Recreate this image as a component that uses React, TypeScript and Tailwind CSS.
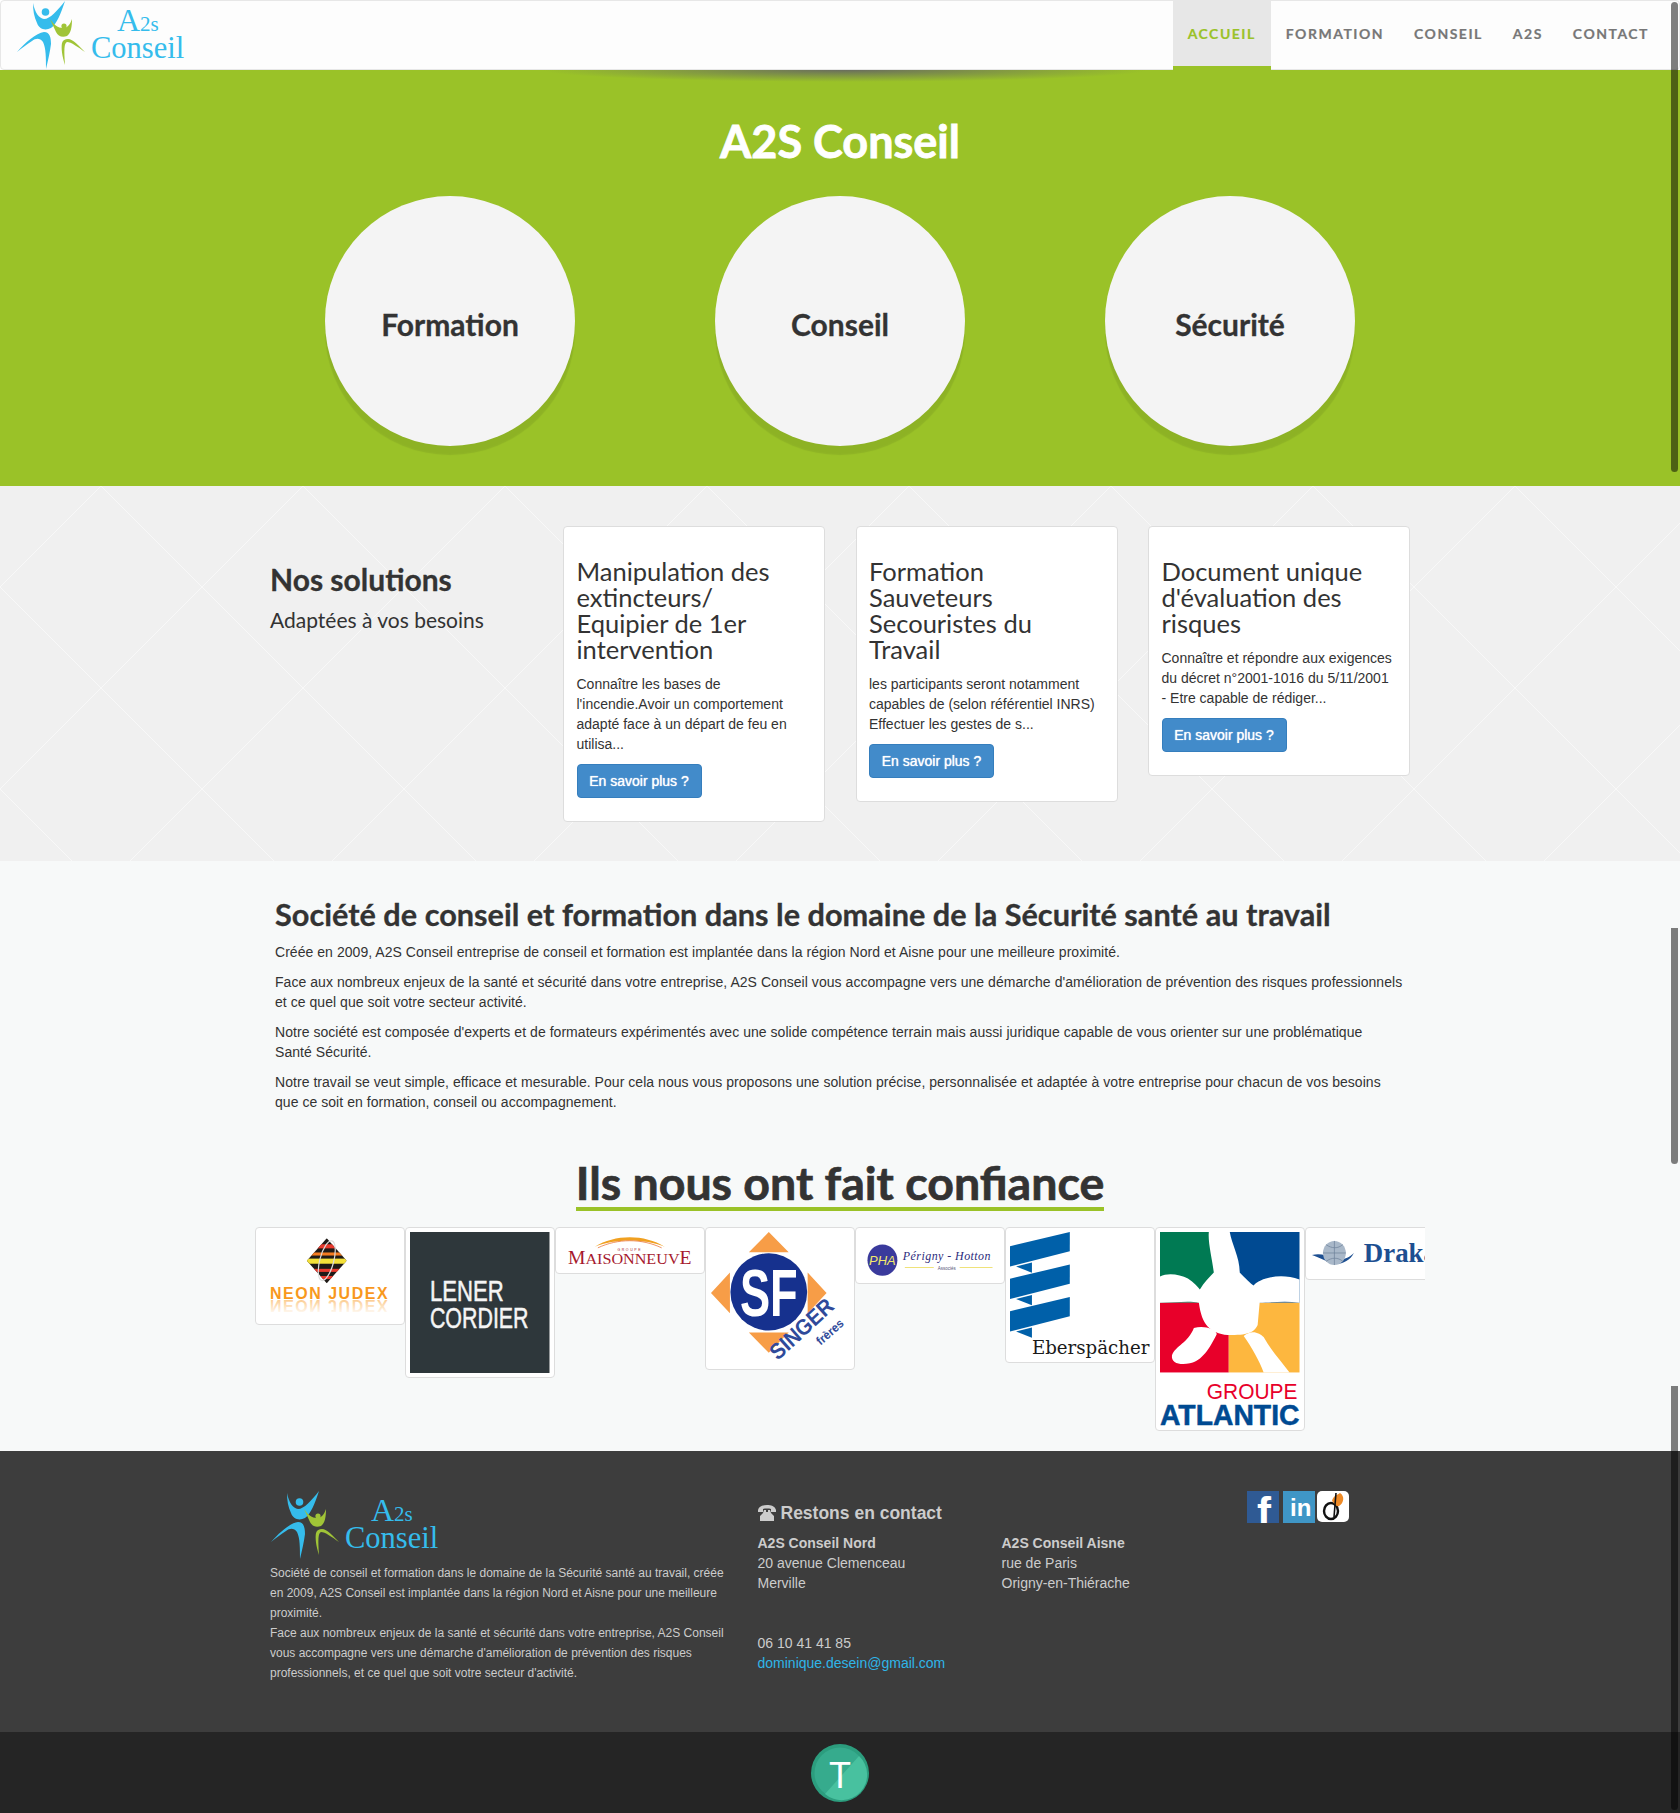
import React from "react";

const raleway = "font-['Lato','Open_Sans',sans-serif]";

function Logo({ className }: { className?: string }) {
  return (
    <svg viewBox="16 0 170 70" className={className}>
      <path fill="#35bcec" d="M33 3C35 13 39 18 44 19C50 19 57 11 65 1C61 13 57 24 51 28C45 31 39 29 37 23C34 17 33 10 33 3Z" />
      <circle cx="45.5" cy="12" r="3.8" fill="#35bcec" />
      <path fill="#35bcec" d="M17 52C26 42 36 33 44 32C50 32 51 38 51 44C50 52 48 60 46 69C46 58 46 48 43 42C40 38 36 38 32 41C27 44 22 48 17 52Z" />
      <path fill="#a0c437" d="M50 19C54 25 58 28 63 28C67 28 70 25 72 19C72 27 71 33 67 36C62 38 58 36 56 32C54 28 52 23 50 19Z" />
      <circle cx="64" cy="26" r="2.6" fill="#a0c437" />
      <path fill="#a0c437" d="M85 52C78 47 71 42 67 42C64 43 64 50 65 65C62 56 61 48 62 43C63 40 65 39 68 39C73 39 79 46 85 52Z" />
      <text x="117" y="31" fill="#35bcec" fontFamily="'Liberation Serif',serif" fontSize="32">
        A<tspan fontSize="21">2s</tspan>
      </text>
      <text x="91" y="58" fill="#35bcec" fontFamily="'Liberation Serif',serif" fontSize="30.5">Conseil</text>
    </svg>
  );
}

const nav = ["ACCUEIL", "FORMATION", "CONSEIL", "A2S", "CONTACT"];

function Header() {
  return (
    <header className="relative z-10 flex h-[70px] justify-between rounded-[4px] border border-[#e7e7e7] bg-[#fdfdfd] pr-[15px]">
      <a className="ml-[15px] block h-[70px] w-[170px]">
        <Logo className="-mt-px h-[70px] w-[170px]" />
      </a>
      <nav className="-mt-px flex h-[70px]">
        {nav.map((n, i) => (
          <a
            key={n}
            className={`${raleway} flex h-[70px] items-center border-b-4 px-[15px] text-[14px] font-bold tracking-[1.5px] [-webkit-text-stroke:0.2px] ${
              i === 0 ? "border-[#9ac228] bg-[#e7e7e7] text-[#9ac228]" : "border-transparent text-[#777777]"
            }`}
          >
            {n}
          </a>
        ))}
      </nav>
    </header>
  );
}

function Hero() {
  return (
    <section className="relative h-[416px] bg-[#9ac228] pt-[48px] text-center">
      <div className="absolute left-[540px] top-0 h-[12px] w-[610px] bg-[radial-gradient(ellipse_at_top,rgba(100,100,100,0.9),rgba(100,100,100,0)_70%)]" />
      <h1 className={`${raleway} text-[45px] leading-[46px] font-bold text-white [-webkit-text-stroke:0.8px]`}>A2S Conseil</h1>
      <div className="mt-[32px] flex justify-center gap-[140px]">
        {["Formation", "Conseil", "Sécurité"].map((t) => (
          <div
            key={t}
            className={`${raleway} flex h-[250px] w-[250px] items-center justify-center rounded-full bg-[#f4f4f4] pt-[7px] text-[30px] font-bold text-[#333333] shadow-[0_9px_1px_rgba(0,0,0,0.08)] [-webkit-text-stroke:0.3px]`}
          >
            {t}
          </div>
        ))}
      </div>
    </section>
  );
}

const cards = [
  {
    br: ["Manipulation des", "extincteurs/", "Equipier de 1er", "intervention"],
    p: ["Connaître les bases de", "l'incendie.Avoir un comportement", "adapté face à un départ de feu en", "utilisa..."],
  },
  {
    br: ["Formation", "Sauveteurs", "Secouristes du", "Travail"],
    p: ["les participants seront notamment", "capables de (selon référentiel INRS)", "Effectuer les gestes de s..."],
  },
  {
    br: ["Document unique", "d'évaluation des", "risques"],
    p: ["Connaître et répondre aux exigences", "du décret n°2001-1016 du 5/11/2001", "- Etre capable de rédiger..."],
  },
];

function Solutions() {
  return (
    <section className="h-[375px] bg-[#f0f0f0] bg-[linear-gradient(45deg,transparent_calc(50%-0.5px),rgba(255,255,255,0.55)_50%,transparent_calc(50%+0.5px)),linear-gradient(-45deg,transparent_calc(50%-0.5px),rgba(255,255,255,0.55)_50%,transparent_calc(50%+0.5px))] bg-[length:202px_202px] bg-[position:0_101px] pt-[40px] pl-[270px]">
      <div className="flex items-start">
        <div className="w-[293px] pt-[35px]">
          <h2 className={`${raleway} text-[30px] leading-[36px] font-bold text-[#333333] [-webkit-text-stroke:0.3px]`}>Nos solutions</h2>
          <p className={`${raleway} mt-[8px] text-[21px] leading-[30px] font-normal text-[#333333]`}>Adaptées à vos besoins</p>
        </div>
        <div className="flex items-start gap-[30.5px]">
          {cards.map((c, i) => (
            <div key={i} className="w-[262px] rounded-[4px] border border-[#dddddd] bg-white pt-[31px] pr-[13px] pb-[23px] pl-[12.5px]">
              <h3 className={`${raleway} text-[25.5px] leading-[26px] font-normal whitespace-nowrap text-[#333333]`}>
                {c.br.map((l) => (
                  <div key={l}>{l}</div>
                ))}
              </h3>
              <p className="mt-[12px] font-['Liberation_Sans',sans-serif] text-[14px] leading-[20px] whitespace-nowrap text-[#333333]">
                {c.p.map((l) => (
                  <span key={l} className="block">
                    {l}
                  </span>
                ))}
              </p>
              <a className="mt-[10px] inline-block h-[34px] w-[125px] rounded-[4px] border border-[#357ebd] bg-[#428bca] text-center font-['Liberation_Sans',sans-serif] text-[14px] leading-[32px] text-white [text-shadow:0_0_1px_#ffffff]">
                En savoir plus ?
              </a>
            </div>
          ))}
        </div>
      </div>
    </section>
  );
}

function Thumb({ h, children }: { h: number; children: React.ReactNode }) {
  return (
    <div className="w-[150px] shrink-0">
      <div className="w-[149.5px] rounded-[4px] border border-[#dddddd] bg-white p-[4px]">
        <svg viewBox={`0 0 140 ${h}`} className="block w-[139.5px]" style={{ height: h + 2 }} preserveAspectRatio="none">
          {children}
        </svg>
      </div>
    </div>
  );
}

const sans = "'Liberation Sans',sans-serif";
const serif = "'Liberation Serif',serif";

function Logos() {
  return (
    <div className="mt-[16px] flex w-[1170px] items-start overflow-hidden">
      <Thumb h={86}>
        <defs>
          <clipPath id="dia">
            <path d="M67 6L87 28L67 50L47 28Z" />
          </clipPath>
          <linearGradient id="fade" x1="0" x2="0" y1="0" y2="1">
            <stop offset="0" stopColor="#f8981d" stopOpacity="0" />
            <stop offset="1" stopColor="#f8981d" stopOpacity="0.6" />
          </linearGradient>
        </defs>
        <g clipPath="url(#dia)">
          <rect x="45" y="5" width="44" height="46" fill="#1f1a17" />
          <rect x="45" y="12" width="44" height="4" fill="#e8392d" />
          <rect x="45" y="20" width="44" height="3" fill="#f47b20" />
          <rect x="45" y="26" width="44" height="5" fill="#f4e13a" />
          <rect x="45" y="36" width="44" height="3" fill="#e8392d" />
          <rect x="45" y="43" width="44" height="3" fill="#e8392d" />
        </g>
        <ellipse cx="67" cy="28" rx="7" ry="20" fill="none" stroke="#dddddd" strokeWidth="1.2" transform="rotate(15 67 28)" />
        <text x="10" y="65" fontFamily={sans} fontWeight="700" fontSize="16" fill="#f8981d" textLength="118">NEON JUDEX</text>
        <g transform="translate(0 130) scale(1 -1)">
          <text x="10" y="64" fontFamily={sans} fontWeight="700" fontSize="16" fill="url(#fade)" textLength="118">NEON JUDEX</text>
        </g>
      </Thumb>
      <Thumb h={139}>
        <rect width="140" height="139" fill="#2e373b" />
        <text x="20" y="68" fontFamily={sans} fontSize="29" fill="#f5f5f5" stroke="#f5f5f5" strokeWidth="0.5" textLength="74" lengthAdjust="spacingAndGlyphs">LENER</text>
        <text x="20" y="95" fontFamily={sans} fontSize="29" fill="#f5f5f5" stroke="#f5f5f5" strokeWidth="0.5" textLength="99" lengthAdjust="spacingAndGlyphs">CORDIER</text>
      </Thumb>
      <Thumb h={35}>
        <path d="M35 14C55 2 85 2 105 14C85 6 55 6 35 14Z" fill="#f0a020" />
        <path d="M38 15C58 6 82 6 102 15" fill="none" stroke="#e8682a" strokeWidth="0.7" />
        <text x="70" y="18" textAnchor="middle" fontFamily={sans} fontSize="3.5" fill="#a6192e" letterSpacing="1.6">GROUPE</text>
        <text x="8" y="30" fontFamily={serif} fontSize="17" fill="#a6192e" textLength="124" lengthAdjust="spacingAndGlyphs">
          M<tspan fontSize="14">AISONNEUV</tspan>E
        </text>
      </Thumb>
      <Thumb h={131}>
        <path d="M59 0L79 20H39Z M59 119L79 99H39Z M1 60L20 40V80Z M117 60L98 40V80Z" fill="#f79d47" />
        <ellipse cx="59" cy="59" rx="38.5" ry="38" fill="#16318e" />
        <text x="59" y="83" textAnchor="middle" fontFamily={sans} fontWeight="700" fontSize="66" fill="#ffffff" textLength="58" lengthAdjust="spacingAndGlyphs">SF</text>
        <text x="68" y="127" fontFamily={sans} fontWeight="700" fontSize="22" fill="#2f4a9a" transform="rotate(-42 68 127)" textLength="78" lengthAdjust="spacingAndGlyphs">SINGER</text>
        <text x="111" y="112" fontFamily={sans} fontWeight="700" fontSize="12" fill="#2f4a9a" transform="rotate(-41 111 112)" textLength="32" lengthAdjust="spacingAndGlyphs">frères</text>
      </Thumb>
      <Thumb h={45}>
        <circle cx="22.5" cy="27" r="15" fill="#3a3a9c" />
        <text x="22.5" y="32" textAnchor="middle" fontFamily={sans} fontStyle="italic" fontSize="13" fill="#f3e96b">PHA</text>
        <text x="43" y="27" fontFamily={serif} fontStyle="italic" fontSize="12" fill="#2c2c7c" textLength="88">Périgny - Hotton</text>
        <path d="M45 34H74M100 34H133" stroke="#efe27a" strokeWidth="1" />
        <text x="87" y="36" textAnchor="middle" fontFamily={sans} fontSize="4.5" fill="#555577">Associés</text>
      </Thumb>
      <Thumb h={124}>
        {[0, 32, 64].map((d) => (
          <g key={d} transform={`translate(0 ${d})`} fill="#0060a9">
            <path d="M0 14L60 0V19L0 34Z" />
            <path d="M6 34L22 30V40Z" />
          </g>
        ))}
        <text x="22" y="120" fontFamily="'DejaVu Serif',serif" fontSize="18" fill="#1a1a1a" textLength="118" lengthAdjust="spacingAndGlyphs">Eberspächer</text>
      </Thumb>
      <Thumb h={192}>
        <rect x="0" y="0" width="69" height="70" fill="#007a53" />
        <rect x="69" y="0" width="71" height="70" fill="#004a92" />
        <rect x="0" y="70" width="69" height="69" fill="#e8002a" />
        <rect x="69" y="70" width="71" height="69" fill="#fdb73f" />
        <path fill="#ffffff" d="M49 0H70C72 12 80 25 80 40C86 46 90 50 94 53C100 46 120 40 140 47V70C125 68 110 70 100 70L98 92C94 100 88 102 68 102C50 100 42 92 39 70C30 68 12 70 0 70V44C8 40 20 42 28 46C34 50 38 54 40 57C44 50 50 44 54 40C52 25 48 10 49 0Z" />
        <path fill="#ffffff" d="M34 95C44 92 56 96 57 101C50 115 42 128 30 130C20 132 11 130 12 122C16 112 28 110 34 95Z" />
        <path fill="#ffffff" d="M84 103C92 96 100 100 104 104C112 118 122 128 130 139H104C100 128 92 114 84 103Z" />
        <text x="138" y="165" textAnchor="end" fontFamily={sans} fontSize="21" fill="#e8002a">GROUPE</text>
        <text x="0" y="191" fontFamily={sans} fontWeight="700" fontSize="29" fill="#004a92" textLength="140" lengthAdjust="spacingAndGlyphs" stroke="#004a92" strokeWidth="0.5">ATLANTIC</text>
      </Thumb>
      <Thumb h={41}>
        <path d="M2 22C10 20 16 22 24 26C32 28 40 24 44 20C40 28 30 32 22 30C14 27 8 24 2 22Z" fill="#1d4f91" />
        <circle cx="24.5" cy="20" r="11.5" fill="#a9b8c9" />
        <path d="M13 20H36M24.5 8.5V31.5M16 12C22 16 28 16 33 12M16 28C22 24 28 24 33 28" stroke="#6f829a" strokeWidth="0.7" fill="none" />
        <text x="54" y="29" fontFamily={serif} fontWeight="700" fontSize="27" fill="#1d4f91">Draka</text>
      </Thumb>
    </div>
  );
}

function About() {
  return (
    <section className="h-[590px] bg-[#f7f9f9] pt-[35px] pl-[255px]">
      <div className="pl-[20px]">
        <h2 className={`${raleway} text-[30.7px] leading-[38px] font-bold whitespace-nowrap text-[#333333] [-webkit-text-stroke:0.3px]`}>
          Société de conseil et formation dans le domaine de la Sécurité santé au travail
        </h2>
        <div className="mt-[8px] w-[1145px] font-['Liberation_Sans',sans-serif] text-[14px] leading-[20px] tracking-[0.045px] text-[#333333]">
          <p className="mb-[10px]">Créée en 2009, A2S Conseil entreprise de conseil et formation est implantée dans la région Nord et Aisne pour une meilleure proximité.</p>
          <p className="mb-[10px]">
            Face aux nombreux enjeux de la santé et sécurité dans votre entreprise, A2S Conseil vous accompagne vers une démarche d'amélioration de prévention des risques professionnels
            <br />
            et ce quel que soit votre secteur activité.
          </p>
          <p className="mb-[10px]">
            Notre société est composée d'experts et de formateurs expérimentés avec une solide compétence terrain mais aussi juridique capable de vous orienter sur une problématique
            <br />
            Santé Sécurité.
          </p>
          <p className="mb-[10px]">
            Notre travail se veut simple, efficace et mesurable. Pour cela nous vous proposons une solution précise, personnalisée et adaptée à votre entreprise pour chacun de vos besoins
            <br />
            que ce soit en formation, conseil ou accompagnement.
          </p>
        </div>
      </div>
      <div className="mt-[45px] w-[1170px] text-center">
        <h2 className={`${raleway} inline-block border-b-[4px] border-[#9ac228] text-[46.5px] leading-[50px] font-bold text-[#333333] [-webkit-text-stroke:0.7px]`}>
          Ils nous ont fait confiance
        </h2>
      </div>
      <Logos />
    </section>
  );
}

function Phone() {
  return (
    <svg viewBox="0 0 18 16" className="h-[16px] w-[18px]" fill="#cccccc">
      <path d="M0 5C1 1 5 0 9 0C13 0 17 1 18 5V7H13V4C11 3.4 7 3.4 5 4V7H0Z" />
      <path d="M5 8L6 5H8V7H10V5H12L13 8L16 11V16H2V11Z" />
    </svg>
  );
}

function Footer() {
  return (
    <footer className="flex h-[281px] bg-[#3d3d3d] pl-[270px] font-['Liberation_Sans',sans-serif] text-[#cccccc]">
      <div className="w-[487.5px] pt-[39px]">
        <Logo className="h-[70px] w-[170px]" />
        <p className="mt-[3px] w-[458px] text-[12px] leading-[20px]">
          Société de conseil et formation dans le domaine de la Sécurité santé au travail, créée en 2009, A2S Conseil est implantée dans la région Nord et Aisne pour une meilleure proximité.
          <br />
          Face aux nombreux enjeux de la santé et sécurité dans votre entreprise, A2S Conseil vous accompagne vers une démarche d'amélioration de prévention des risques professionnels, et ce quel que soit votre secteur d'activité.
        </p>
      </div>
      <div className="w-[489.5px] pt-[49px]">
        <h4 className="flex h-[26px] items-center gap-[5px] text-[17.5px] leading-[26px] font-bold">
          <Phone />
          Restons en contact
        </h4>
        <div className="mt-[7px] flex text-[14px] leading-[20px]">
          <div className="w-[244px]">
            <strong>A2S Conseil Nord</strong>
            <br />
            20 avenue Clemenceau
            <br />
            Merville
          </div>
          <div>
            <strong>A2S Conseil Aisne</strong>
            <br />
            rue de Paris
            <br />
            Origny-en-Thiérache
          </div>
        </div>
        <div className="mt-[40px] text-[14px] leading-[20px]">
          06 10 41 41 85
          <br />
          <a className="text-[#2fb5e8]">dominique.desein@gmail.com</a>
        </div>
      </div>
      <div className="flex items-start gap-[4px] pt-[40px]">
        <svg viewBox="0 0 32 32" className="h-[32px] w-[32px]">
          <rect width="32" height="32" fill="#2f5a94" />
          <text x="10" y="36" fontFamily={sans} fontWeight="700" fontSize="42" fill="#ffffff">f</text>
        </svg>
        <svg viewBox="0 0 32 32" className="-mr-[2px] h-[32px] w-[32px]">
          <rect width="32" height="32" fill="#3f96c6" />
          <text x="7" y="25" fontFamily={sans} fontWeight="700" fontSize="24" fill="#ffffff">in</text>
        </svg>
        <svg viewBox="0 0 32 31" className="h-[31px] w-[32px]">
          <rect width="32" height="31" rx="5" fill="#ffffff" />
          <ellipse cx="14" cy="20" rx="7" ry="8" fill="none" stroke="#111111" strokeWidth="2.4" />
          <path d="M15 10C16 5 20 4 23 2C28 5 27 12 22 15C19 16 18 13 15 10Z" fill="#ee8a26" />
          <path d="M19 2L17 26" stroke="#111111" strokeWidth="1.6" />
        </svg>
      </div>
    </footer>
  );
}

function Bottom() {
  return (
    <div className="flex h-[81px] justify-center bg-[#252525] pt-[12px]">
      <svg viewBox="0 0 58 58" className="h-[58px] w-[58px]">
        <circle cx="29" cy="29" r="29" fill="#2c9d7e" />
        <circle cx="29" cy="29" r="25.5" fill="#36ab8d" />
        <path d="M14 50L48 12A25.5 25.5 0 0 1 14 50Z" fill="#48c19f" />
        <text x="29" y="44" textAnchor="middle" fontFamily={sans} fontSize="36" fill="#ffffff">T</text>
      </svg>
    </div>
  );
}

function Scrollbars() {
  return (
    <>
      <div className="absolute top-[2px] left-[1671px] z-20 h-[470px] w-[7px] rounded-[4px] bg-[rgba(0,0,0,0.5)]" />
      <div className="absolute top-[928px] left-[1671px] z-20 h-[236px] w-[7px] rounded-b-[4px] bg-[rgba(0,0,0,0.5)]" />
      <div className="absolute top-[1386px] left-[1671px] z-20 h-[424px] w-[7px] rounded-b-[4px] bg-[rgba(0,0,0,0.5)]" />
    </>
  );
}

export default function App() {
  return (
    <div className="relative h-[1813px] w-[1680px] overflow-hidden bg-white">
      <Header />
      <Hero />
      <Solutions />
      <About />
      <Footer />
      <Bottom />
      <Scrollbars />
    </div>
  );
}
